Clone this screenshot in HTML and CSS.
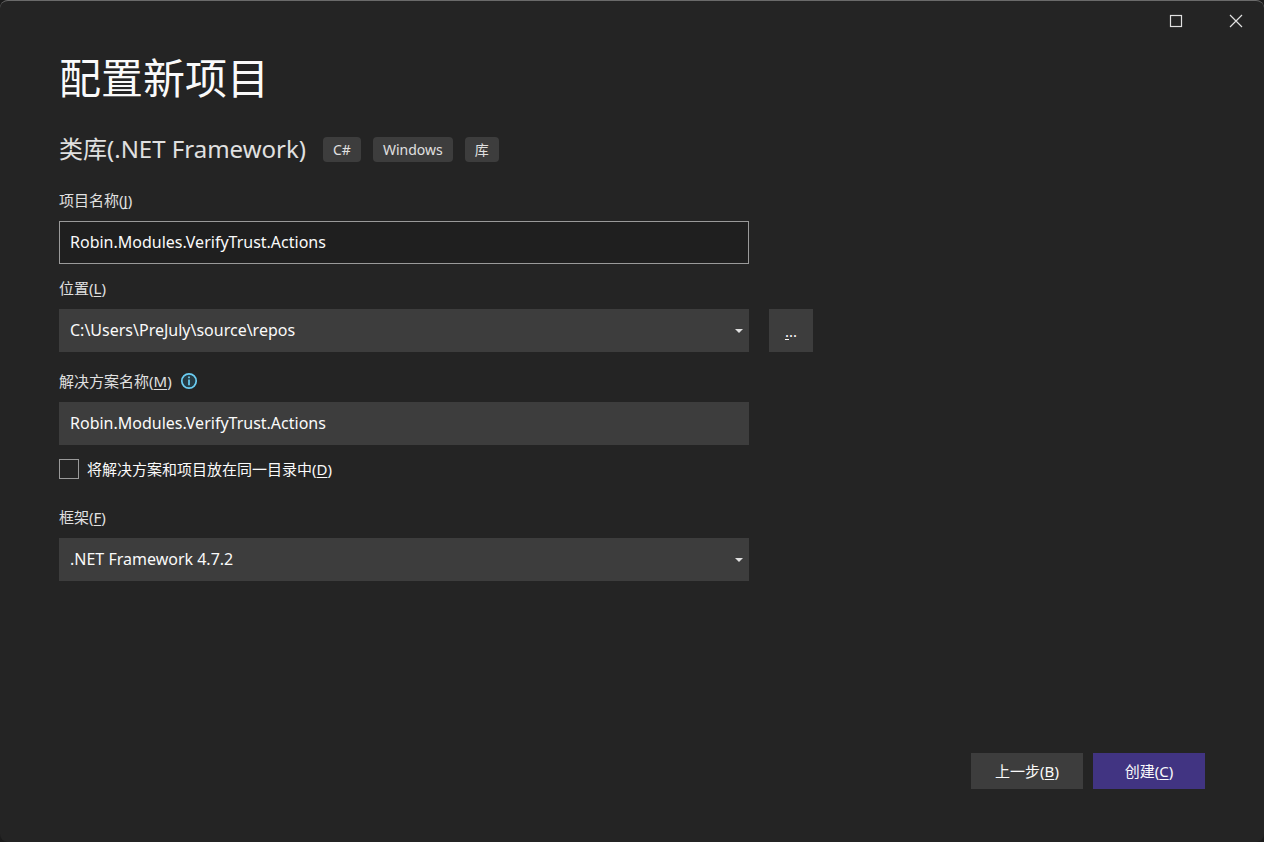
FILE: index.html
```html
<!DOCTYPE html>
<html lang="zh-CN">
<head>
  <meta charset="UTF-8">
  <title>配置新项目</title>
  <link rel="stylesheet" href="styles.css">
</head>
<body>
  <div class="window">
    <header class="titlebar">
      <button type="button" class="window-button" aria-label="最大化">
        <svg width="14" height="14" viewBox="0 0 14 14"><rect x="1.5" y="1.5" width="11" height="11" fill="none" stroke="#e0e0e0" stroke-width="1.2"/></svg>
      </button>
      <button type="button" class="window-button" aria-label="关闭">
        <svg width="14" height="14" viewBox="0 0 14 14"><path d="M1 1L13 13M13 1L1 13" stroke="#e0e0e0" stroke-width="1.2"/></svg>
      </button>
    </header>

    <main class="content">
      <h1>配置新项目</h1>
      <div class="template">
        <h2>类库(.NET Framework)</h2>
        <span class="tag">C#</span>
        <span class="tag">Windows</span>
        <span class="tag">库</span>
      </div>

      <form id="projectForm">
        <!-- 项目名称 -->
        <div class="field">
          <label for="projectName">项目名称(<u>J</u>)</label>
          <input type="text" id="projectName" class="box focused" value="Robin.Modules.VerifyTrust.Actions">
        </div>

        <!-- 位置 -->
        <div class="field">
          <label for="location">位置(<u>L</u>)</label>
          <div class="row">
            <div class="select">
              <select id="location" class="box">
                <option>C:\Users\PreJuly\source\repos</option>
              </select>
              <svg class="arrow" width="8" height="4" viewBox="0 0 8 4"><path d="M0 0H8L4 4Z" fill="#e0e0e0"/></svg>
            </div>
            <button type="button" class="browse" aria-label="浏览"><u>.</u>..</button>
          </div>
        </div>

        <!-- 解决方案名称 -->
        <div class="field solution">
          <div class="label-row">
            <label for="solutionName">解决方案名称(<u>M</u>)</label>
            <svg width="18" height="18" viewBox="0 0 18 18"><circle cx="9" cy="9" r="7.2" fill="#263b44" stroke="#6bcdf2" stroke-width="1.7"/><path d="M9 7.6V13.2M9 4.6V6.3" stroke="#6bcdf2" stroke-width="1.7"/></svg>
          </div>
          <input type="text" id="solutionName" class="box" value="Robin.Modules.VerifyTrust.Actions">
        </div>

        <div class="check">
          <input type="checkbox" id="sameFolder">
          <label for="sameFolder">将解决方案和项目放在同一目录中(<u>D</u>)</label>
        </div>

        <!-- 框架 -->
        <div class="field">
          <label for="framework">框架(<u>F</u>)</label>
          <div class="select">
            <select id="framework" class="box">
              <option>.NET Framework 4.7.2</option>
            </select>
            <svg class="arrow" width="8" height="4" viewBox="0 0 8 4"><path d="M0 0H8L4 4Z" fill="#e0e0e0"/></svg>
          </div>
        </div>
      </form>
    </main>

    <footer class="actions">
      <button type="button">上一步(<u>B</u>)</button>
      <button type="submit" form="projectForm" class="primary">创建(<u>C</u>)</button>
    </footer>
  </div>
</body>
</html>
```

FILE: styles.css
```css
* {
  box-sizing: border-box;
}
body {
  margin: 0;
  background: #1b1b1b;
  color: #fafafa;
  font-family: "Noto Sans", "Noto Sans CJK SC", sans-serif;
  font-size: 15px;
  line-height: 20px;
}
button, input, select {
  font: inherit;
  color: inherit;
}
u {
  text-underline-offset: 2px;
  text-decoration-skip-ink: none;
}
.window {
  display: flex;
  flex-direction: column;
  min-height: 100vh;
  background: #242424;
  border-top: 1px solid #6a6a6a;
  border-radius: 8px;
}
.titlebar {
  display: flex;
  justify-content: flex-end;
  height: 40px;
}
.window-button {
  display: flex;
  align-items: center;
  justify-content: center;
  width: 60px;
  padding: 0 2px;
  border: none;
  background: none;
}
.window-button:last-child {
  width: 56px;
}
.window-button:first-child {
  width: 64px;
}
.content {
  flex: 1;
  padding: 7px 59px 0;
}
h1 {
  margin: 0;
  font-size: 42px;
  font-weight: 400;
  line-height: 60px;
}
.template {
  display: flex;
  align-items: center;
  gap: 12px;
  margin: 24px 0;
}
h2 {
  margin: 0 5px 0 0;
  color: #e0e0e0;
  font-size: 24px;
  font-weight: 400;
  line-height: 34px;
}
.tag {
  padding: 3px 10px 2px;
  border-radius: 4px;
  background: #3d3d3d;
  color: #e0e0e0;
  font-size: 14px;
}
form {
  max-width: 754px;
}
.field {
  margin-bottom: 14px;
}
.field > label, .label-row {
  display: flex;
  align-items: center;
  margin-bottom: 11px;
  color: #e0e0e0;
}
.label-row {
  gap: 8px;
}
.box {
  display: block;
  width: 690px;
  max-width: 100%;
  height: 43px;
  padding: 0 10px 2px;
  border: 1px solid #3d3d3d;
  border-radius: 0;
  outline: none;
  background: #3d3d3d;
  font-size: 16px;
  appearance: none;
}
.box.focused {
  border-color: #9a9a9a;
  background: #1f1f1f;
}
.row {
  display: flex;
  gap: 20px;
}
.select {
  position: relative;
  width: 690px;
}
.arrow {
  position: absolute;
  top: 20px;
  right: 6px;
  pointer-events: none;
}
.browse {
  width: 44px;
  padding: 0;
  border: none;
  background: #3d3d3d;
}
.solution {
  margin-top: 19px;
}
.check {
  display: flex;
  align-items: center;
  gap: 8px;
  margin-bottom: 28px;
}
.check input {
  width: 20px;
  height: 20px;
  margin: 0;
  border: 1px solid #9a9a9a;
  background: #242424;
  appearance: none;
}
.actions {
  display: flex;
  justify-content: flex-end;
  gap: 10px;
  padding: 0 59px 53px;
}
.actions button {
  width: 112px;
  height: 36px;
  padding: 0;
  border: none;
  background: #3d3d3d;
}
.actions .primary {
  background: #413482;
}
```
